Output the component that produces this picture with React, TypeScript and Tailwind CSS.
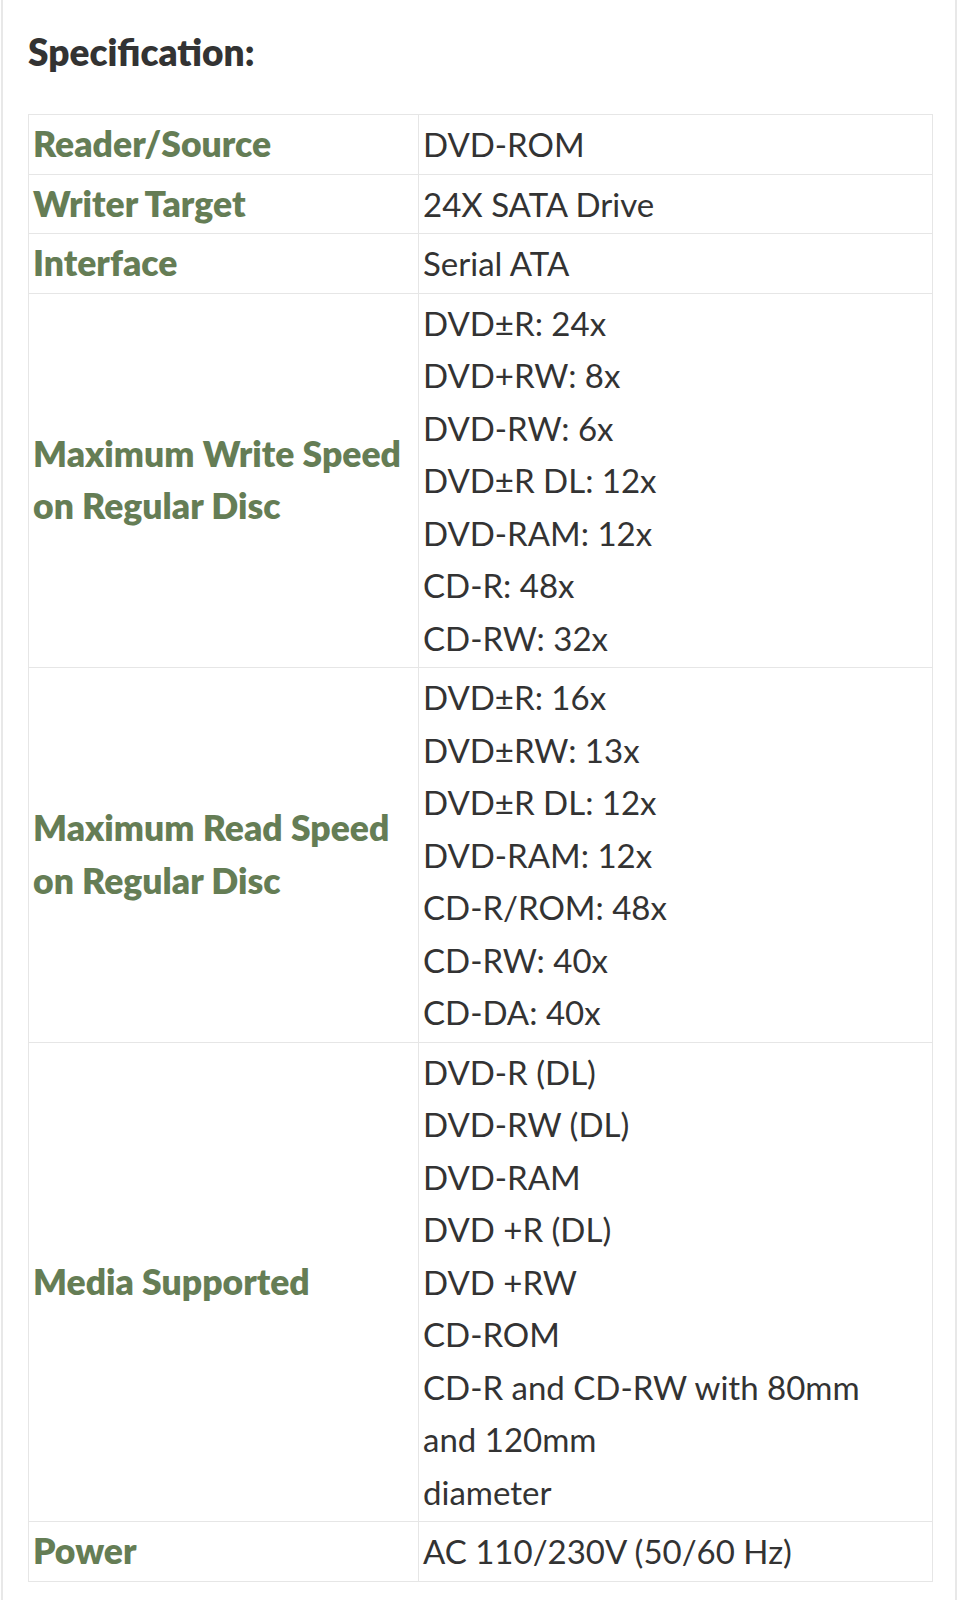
type SpecRow = {
  label: string[];
  values: string[];
};

const rows: SpecRow[] = [
  { label: ["Reader/Source"], values: ["DVD-ROM"] },
  { label: ["Writer Target"], values: ["24X SATA Drive"] },
  { label: ["Interface"], values: ["Serial ATA"] },
  {
    label: ["Maximum Write Speed", "on Regular Disc"],
    values: [
      "DVD±R: 24x",
      "DVD+RW: 8x",
      "DVD-RW: 6x",
      "DVD±R DL: 12x",
      "DVD-RAM: 12x",
      "CD-R: 48x",
      "CD-RW: 32x",
    ],
  },
  {
    label: ["Maximum Read Speed", "on Regular Disc"],
    values: [
      "DVD±R: 16x",
      "DVD±RW: 13x",
      "DVD±R DL: 12x",
      "DVD-RAM: 12x",
      "CD-R/ROM: 48x",
      "CD-RW: 40x",
      "CD-DA: 40x",
    ],
  },
  {
    label: ["Media Supported"],
    values: [
      "DVD-R (DL)",
      "DVD-RW (DL)",
      "DVD-RAM",
      "DVD +R (DL)",
      "DVD +RW",
      "CD-ROM",
      "CD-R and CD-RW with 80mm",
      "and 120mm",
      "diameter",
    ],
  },
  { label: ["Power"], values: ["AC 110/230V (50/60 Hz)"] },
];

export default function App() {
  return (
    <div className="min-h-[1600px] bg-white font-['Lato',sans-serif]">
      <div className="ml-[1px] mr-[4px] min-h-[1600px] border-x-2 border-[#e8e8e8] pl-[25px] pr-[22px] pt-[26px]">
        <h4 className="text-[37px] font-extrabold leading-[52px] text-[#333]">
          Specification:
        </h4>

        <table className="mt-[36px] w-full border-collapse text-[33px] leading-[52.5px]">
          <tbody>
            {rows.map((row) => (
              <tr key={row.label.join(" ")}>
                <td className="w-[390px] border border-[#e6e6e6] px-[4px] py-[3px] align-middle text-[35.5px] font-extrabold text-[#657d55]">
                  {row.label.map((line) => (
                    <div key={line}>{line}</div>
                  ))}
                </td>
                <td className="border border-[#e6e6e6] px-[4px] py-[3px] align-top text-[#333]">
                  {row.values.map((line) => (
                    <div key={line}>{line}</div>
                  ))}
                </td>
              </tr>
            ))}
          </tbody>
        </table>
      </div>
    </div>
  );
}
